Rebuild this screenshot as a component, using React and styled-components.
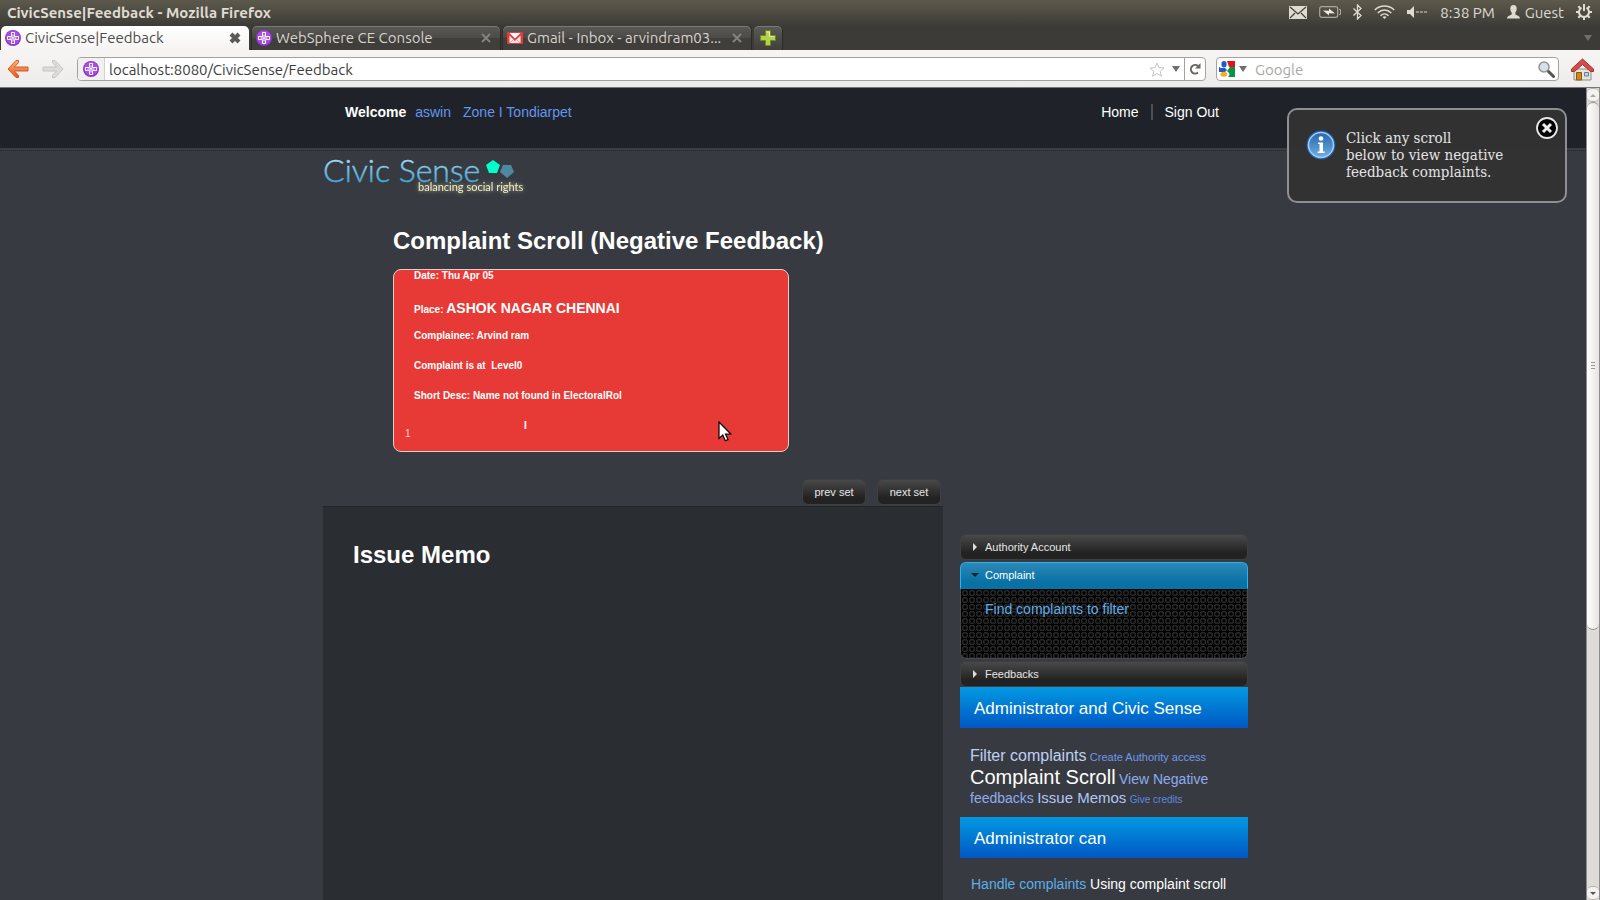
import React from "react";
import styled, { createGlobalStyle } from "styled-components";

const GlobalStyle = createGlobalStyle`
  * { box-sizing: border-box; }
  body { margin: 0; background: #373b41; }
  h1, h2, p { margin: 0; }
  button, input { font: inherit; color: inherit; border: 0; padding: 0; margin: 0; background: none; }
  a { text-decoration: none; color: inherit; }
  svg { display: block; flex: none; }
`;

const sans = `"Liberation Sans", Arial, sans-serif`;
const system = `Ubuntu, "Open Sans", "Noto Sans", sans-serif`;

const Window = styled.div`
  display: flex;
  flex-direction: column;
  height: 100vh;
  overflow: hidden;
  font-family: ${system};
  font-size: 15px;
`;

/* ---------- desktop panel and browser chrome ---------- */

const Chrome = styled.header`
  flex: none;
  background: linear-gradient(#5d5a4c, #3c3b37 26px);
  color: #dfdbd2;
`;

const TitleBar = styled.div`
  display: flex;
  align-items: center;
  justify-content: space-between;
  height: 26px;
  padding: 0 8px 2px 7px;
`;

const WindowTitle = styled.div`
  font-weight: 700;
`;

const Indicators = styled.div`
  display: flex;
  align-items: center;
  gap: 12px;
`;

const User = styled.button`
  display: flex;
  align-items: center;
  gap: 5px;
`;

const TabStrip = styled.nav`
  display: flex;
  align-items: flex-end;
  gap: 3px;
  height: 24px;
  padding: 0 8px 0 1px;
`;

const Tab = styled.div`
  display: flex;
  align-items: center;
  gap: 4px;
  width: 248px;
  height: 24px;
  padding: 0 8px 0 4px;
  border-radius: 5px 5px 0 0;
  color: ${(p) => (p.$active ? "#4c4c4c" : "#d8d4cb")};
  background: ${(p) => (p.$active ? "linear-gradient(#ffffff, #f5f4f2)" : "linear-gradient(#5a5955, #4b4a46 50%, #403f3b 52%, #3f3e3a)")};
  box-shadow: ${(p) => (p.$active ? "none" : "inset 0 1px #7b7a75, 1px 0 #2b2a27, -1px 0 #2b2a27")};
`;

const TabLabel = styled.button`
  flex: 1;
  text-align: left;
  white-space: nowrap;
  line-height: 20px;
`;

const NewTab = styled.button`
  display: flex;
  align-items: center;
  justify-content: center;
  width: 28px;
  height: 24px;
  border-radius: 5px 5px 0 0;
  background: linear-gradient(#5a5955, #403f3b);
  box-shadow: inset 0 1px #7b7a75, 1px 0 #2b2a27;
`;

const AllTabs = styled.button`
  margin-left: auto;
  align-self: center;
`;

const Toolbar = styled.div`
  display: flex;
  align-items: center;
  height: 38px;
  padding: 1px 6px 0 7px;
  background: linear-gradient(#f6f5f3, #edecea);
  border-bottom: 1px solid #77767a;
  color: #3c3c3c;
`;

const NavButton = styled.button`
  margin-right: 13px;
`;

const Field = styled.div`
  display: flex;
  align-items: center;
  height: 24px;
  background: #fff;
  border: 1px solid #a5a29e;
  border-radius: 4px;
  overflow: hidden;
`;

const Address = styled(Field)`
  flex: 1;
  margin-right: 10px;
`;

const Search = styled(Field)`
  width: 343px;
  gap: 4px;
  padding: 0 3px 0 2px;
  margin-right: 12px;
`;

const SiteIdentity = styled.button`
  display: flex;
  align-items: center;
  justify-content: center;
  width: 27px;
  height: 22px;
  background: #f1f0ee;
  border-right: 1px solid #d5d3d0;
`;

const TextInput = styled.input`
  flex: 1;
  min-width: 0;
  height: 22px;
  padding-left: 4px;
  outline: 0;
  &::placeholder { color: #a9a8a6; opacity: 1; }
`;

const FieldActions = styled.div`
  display: flex;
  align-items: center;
  gap: 7px;
  padding-right: 4px;
`;

const Reload = styled.button`
  display: flex;
  align-items: center;
  justify-content: center;
  width: 21px;
  height: 22px;
  border-left: 1px solid #a5a29e;
`;

/* ---------- page ---------- */

const Viewport = styled.div`
  display: flex;
  flex: 1;
  min-height: 0;
`;

const Page = styled.div`
  position: relative;
  flex: 1;
  min-width: 0;
  overflow: hidden;
  background: #373b41;
  color: #fff;
  font-family: ${sans};
  font-size: 14px;
  line-height: 16px;
`;

const Container = styled.div`
  width: 100%;
  max-width: 940px;
  margin: 0 auto;
`;

const TopBar = styled.div`
  height: 62px;
  padding-top: 16px;
  background: #1f2329;
  border-bottom: 2px solid #3a3d42;
`;

const TopBarInner = styled(Container)`
  display: flex;
  justify-content: space-between;
  padding: 0 44px 0 22px;
`;

const Welcome = styled.div`
  display: flex;
  gap: 9px;
`;

const ZoneLink = styled.a`
  color: #6495ed;
  margin-left: ${(p) => (p.$spaced ? "3px" : "0")};
`;

const Menu = styled.nav`
  display: flex;
  gap: 12px;
`;

const MenuDivider = styled.span`
  width: 2px;
  background: #4d5056;
`;

const Content = styled.div`
  border-top: 1px dotted #23262b;
  padding-top: 4px;
`;

const Scroll = styled.section`
  padding: 30px 0 27px 70px;
`;

const Title = styled.h1`
  font-size: 24px;
  line-height: 28px;
  font-weight: 700;
`;

const Card = styled.article`
  width: 396px;
  height: 183px;
  margin-top: 14px;
  border: 1px solid #dcd0ce;
  border-radius: 8px;
  background: #e73a36;
  font-size: 10px;
  line-height: 12px;
  font-weight: 700;
`;

const CardLine = styled.p`
  padding-left: 20px;
  margin-bottom: 18px;
  white-space: pre;
`;

const PlaceLine = styled(CardLine)`
  line-height: 16px;
  margin-bottom: 12px;
`;

const Place = styled.span`
  font-size: 14px;
`;

const CardFoot = styled.div`
  display: flex;
  height: 20px;
  padding-left: 11px;
`;

const CardIndex = styled.span`
  align-self: flex-end;
  width: 119px;
  font-weight: 400;
  color: #f8cfce;
`;

const Columns = styled.div`
  display: flex;
  align-items: flex-start;
  gap: 17px;
`;

const MainColumn = styled.main`
  width: 620px;
`;

const Pager = styled.div`
  display: flex;
  justify-content: flex-end;
  gap: 11px;
  padding: 0 2px 1px 0;
`;

const DarkButton = styled.button`
  width: 64px;
  height: 26px;
  border: 1px solid #3f3f3f;
  border-radius: 6px;
  background: linear-gradient(#494949, #222 75%);
  color: #e6e6e6;
  font-size: 11px;
`;

const Memo = styled.section`
  min-height: 560px;
  padding: 34px 30px;
  background: #2a2d31;
  border-top: 1px solid #222529;
`;

const Sidebar = styled.aside`
  width: 288px;
  padding-top: 55px;
`;

const Accordion = styled.div`
  display: flex;
  flex-direction: column;
  gap: 2px;
  font-size: 11px;
`;

const AccordionHead = styled.button`
  display: flex;
  align-items: center;
  gap: 6px;
  height: ${(p) => (p.$open ? "27px" : "26px")};
  padding: 0 0 1px 10px;
  border: 1px solid ${(p) => (p.$open ? "#26b3f7" : "#3f3f3f")};
  border-bottom-color: ${(p) => (p.$open ? "#0972a5" : "#3f3f3f")};
  border-radius: ${(p) => (p.$open ? "6px 6px 0 0" : "6px")};
  background: ${(p) => (p.$open ? "linear-gradient(#2c88b6, #0972a5 75%)" : "linear-gradient(#494949, #222 75%)")};
  color: ${(p) => (p.$open ? "#fff" : "#e6e6e6")};
  text-align: left;
`;

const AccordionBody = styled.div`
  height: 70px;
  margin-top: -2px;
  padding: 12px 24px;
  border: 1px solid #4a4a4a;
  border-top: 0;
  border-radius: 0 0 6px 6px;
  background-color: #000;
  background-image:
    radial-gradient(circle at 4px 4px, #000 1px, #242424 2px, #242424 3px, transparent 3px),
    linear-gradient(45deg, #181818 1px, transparent 1px);
  background-size: 7px 7px;
  font-size: 14px;
`;

const BlueLink = styled.a`
  color: #5eaeea;
`;

const Banner = styled.h2`
  height: 41px;
  padding: 3px 14px 0;
  background: linear-gradient(#0299e1, #0058c4);
  font-size: 17px;
  line-height: 38px;
  font-weight: 400;
  margin-top: ${(p) => (p.$first ? "0" : "8px")};
`;

const TagCloud = styled.p`
  padding: 19px 10px 0;
  font-size: 12px;
  line-height: 18px;
`;

const Tag = styled.a`
  font-size: ${(p) => p.$size}px;
  line-height: ${(p) => (p.$size > 16 ? "22px" : "18px")};
  color: ${(p) => p.$color};
`;

const Note = styled.p`
  padding: 18px 11px;
`;

const Toast = styled.div`
  position: absolute;
  top: 20px;
  right: 19px;
  display: flex;
  gap: 10px;
  width: 280px;
  height: 95px;
  padding: 20px 0 0 17px;
  border: 2px solid #8d8f91;
  border-radius: 10px;
  background: rgba(50, 50, 50, 0.96);
  color: #e4e4e4;
  font-family: "DejaVu Serif Condensed", "DejaVu Serif", serif;
  font-size: 15px;
  line-height: 17px;
`;

const ToastClose = styled.button`
  position: absolute;
  top: 7px;
  right: 7px;
`;

const ScrollTrack = styled.div`
  display: flex;
  flex-direction: column;
  width: 14px;
  border: 1px solid #8f8d8a;
  border-width: 0 1px;
  background: #dedcd9;
`;

const ScrollArrow = styled.button`
  display: flex;
  align-items: center;
  justify-content: center;
  height: 14px;
  background: #f3f2f1;
  border: 1px solid #b5b2ae;
  border-width: 1px 0;
  border-radius: 5px;
`;

const ScrollThumb = styled.div`
  display: flex;
  align-items: center;
  justify-content: center;
  height: 65%;
  margin-bottom: auto;
  border: 1px solid #918f8c;
  border-width: 1px 0;
  border-radius: 6px;
  background: linear-gradient(90deg, #fff, #e6e4e2);
`;

const Pointer = styled.div`
  position: absolute;
  left: 45.3%;
  top: 333px;
`;

const LogoTagline = styled.text`
  font-family: Lato, sans-serif;
  font-size: 11px;
  fill: #f0edc8;
  filter: drop-shadow(0 0 2px #b5b28a);
`;

/* ---------- drawings ---------- */

const Globe = () => (
  <svg width="16" height="16" viewBox="0 0 16 16">
    <circle cx="8" cy="8" r="8" fill="#8a35c9" />
    <circle cx="8" cy="7.500" r="7" fill="#aa4be6" />
    <path d="M6.500 2.500h3v4h4v3h-4v4h-3v-4h-4v-3h4zM8 4.500v7M4.500 8h7" fill="none" stroke="#fff" strokeWidth="1" strokeLinejoin="round" />
  </svg>
);

const GmailIcon = () => (
  <svg width="16" height="12" viewBox="0 0 16 12">
    <rect width="16" height="12" rx="1" fill="#e03c3c" />
    <path d="M2.500 1h11L8 6.500z" fill="#fff" />
    <path d="M2.500 3.500V11h11V3.500L8 9z" fill="#fbeaea" />
    <path d="M3 11l3.500-3.500M13 11L9.500 7.500" stroke="#efa3a3" />
  </svg>
);

const Cross = ({ color, width = 2 }) => (
  <svg width="12" height="12" viewBox="0 0 12 12">
    <path d="M2 2l8 8M10 2l-8 8" stroke={color} strokeWidth={width} />
  </svg>
);

const Triangle = ({ color = "#6f6e6a", width = 8 }) => (
  <svg width={width} height="6" viewBox="0 0 8 6"><path d="M0 0h8L4 6z" fill={color} /></svg>
);

const ArrowIcon = ({ forward }) => (
  <svg width="22" height="20" viewBox="0 0 22 20">
    <defs>
      <linearGradient id="back" x2="0" y2="1"><stop stopColor="#f8b876" /><stop offset="1" stopColor="#e2561f" /></linearGradient>
    </defs>
    <path
      d={forward ? "M21 10l-8 8.500h-2.500v-2L14.500 12H1V8h13.500l-4-4.500v-2H13z" : "M1 10l8-8.500h2.500v2L7.500 8H21v4H7.500l4 4.500v2H9z"}
      fill={forward ? "#dddbd8" : "url(#back)"}
      stroke={forward ? "#c6c4c1" : "#d9572a"}
      strokeLinejoin="round"
    />
  </svg>
);

const PlusIcon = () => (
  <svg width="16" height="16" viewBox="0 0 16 16">
    <path d="M5.500.5h5v5h5v5h-5v5h-5v-5h-5v-5h5z" fill="#b4d14a" stroke="#6a8c27" />
    <path d="M6.500 2h3v4.500H14" fill="none" stroke="#e4f0a0" />
  </svg>
);

const MailIcon = () => (
  <svg width="18" height="13" viewBox="0 0 18 13">
    <rect width="18" height="13" fill="#dfdbd2" />
    <path d="M1 1l8 7 8-7M1 12l5-5M17 12l-5-5" fill="none" stroke="#45443f" strokeWidth="1.300" />
  </svg>
);

const BatteryIcon = () => (
  <svg width="22" height="12" viewBox="0 0 22 12">
    <rect x=".7" y=".7" width="18" height="10.600" rx="2" fill="none" stroke="#aaa79e" strokeWidth="1.200" />
    <path d="M20 3.500h1.500v5H20" fill="none" stroke="#aaa79e" />
    <path d="M4 4.500l6 .2V2.500l6 5-6-.3v2.300z" fill="#eeeae2" />
  </svg>
);

const BluetoothIcon = () => (
  <svg width="9" height="16" viewBox="0 0 9 16">
    <path d="M.5 4.500l7.500 7-3.500 3.500V1L8 4.500l-7.500 7" fill="none" stroke="#dfdbd2" strokeWidth="1.300" />
  </svg>
);

const WifiIcon = () => (
  <svg width="21" height="14" viewBox="0 0 21 14">
    <g fill="none" stroke="#dfdbd2" strokeWidth="1.500">
      <path d="M.8 5c5.500-5.300 13.900-5.300 19.400 0" />
      <path d="M3.700 8c4-3.900 9.600-3.900 13.600 0" />
      <path d="M6.500 10.700c2.300-2.200 5.700-2.200 8 0" />
    </g>
    <path d="M8.500 12c1.200-1 2.800-1 4 0l-2 2z" fill="#dfdbd2" />
  </svg>
);

const SpeakerIcon = () => (
  <svg width="21" height="12" viewBox="0 0 21 12">
    <path d="M0 4h3l4-4v12L3 8H0z" fill="#dfdbd2" />
    <path d="M9 6h12" stroke="#a9a69e" strokeWidth="1.500" strokeDasharray="3 1" />
  </svg>
);

const PersonIcon = () => (
  <svg width="13" height="14" viewBox="0 0 13 14">
    <path d="M6.500 0c2.200 0 3.300 1.600 3.200 3.800C9.600 6 8.800 7 8.300 7.800v1.400c1.200 1.300 4.400 1.300 4.700 4.300H0c.3-3 3.500-3 4.700-4.300V7.800C4.200 7 3.400 6 3.300 3.800 3.200 1.600 4.300 0 6.500 0z" fill="#dfdbd2" />
  </svg>
);

const PowerGear = () => (
  <svg width="16" height="16" viewBox="0 0 16 16" stroke="#dfdbd2" fill="none">
    <path d="M5.500 3.700a5 5 0 1 0 5 0" strokeWidth="2" />
    <path d="M8 0v7" strokeWidth="2" />
    <path d="M8 13v3M0 8h3M13 8h3M2.300 2.300l2 2M13.700 2.300l-2 2M2.300 13.700l2-2M13.700 13.700l-2-2" strokeWidth="2" />
  </svg>
);

const StarIcon = () => (
  <svg width="16" height="15" viewBox="0 0 16 15">
    <path d="M8 1l2 4.600 5 .4-3.800 3.300 1.200 4.900L8 11.600l-4.400 2.600 1.200-4.900L1 6l5-.4z" fill="#fff" stroke="#c5c3c0" />
  </svg>
);

const ReloadIcon = () => (
  <svg width="12" height="12" viewBox="0 0 12 12">
    <path d="M9 9.500A4.300 4.300 0 1 1 9 3" fill="none" stroke="#666561" strokeWidth="2" />
    <path d="M11.500 0v5.500H6z" fill="#666561" />
  </svg>
);

const GoogleIcon = () => (
  <svg width="16" height="16" viewBox="0 0 16 16">
    <rect width="16" height="16" fill="#fff" />
    <path d="M8 0h8v6H10z" fill="#e2141b" />
    <path d="M11 6h5v10H9c3-3 1-4-1-6z" fill="#0a9244" />
    <path d="M0 6l2 1h4l2 2-2 2H0z" fill="#1f5bc8" />
    <ellipse cx="5" cy="3.300" rx="2.600" ry="3.300" fill="#1f5bc8" />
    <ellipse cx="4.800" cy="13.300" rx="3.400" ry="2.500" fill="#f3ae1b" />
  </svg>
);

const Magnifier = () => (
  <svg width="17" height="17" viewBox="0 0 17 17">
    <path d="M10 10l5.500 5.500" stroke="#55534f" strokeWidth="3" strokeLinecap="round" />
    <circle cx="6" cy="6" r="5" fill="#d5e2ea" stroke="#96948f" strokeWidth="1.500" />
  </svg>
);

const HomeIcon = () => (
  <svg width="23" height="23" viewBox="0 0 23 23">
    <path d="M3 11h17v11H3z" fill="#e6e3df" stroke="#8f8c88" />
    <path d="M5.500 14.500h5V22h-5z" fill="#d0851a" stroke="#8d5a10" />
    <path d="M13.500 14.500h4v3.500h-4z" fill="#bcd3ea" stroke="#6d7d91" />
    <path d="M11.500 1L22.500 11v2.500h-3l-8-7-8 7h-3V11z" fill="#d64a4a" stroke="#a92f2f" strokeLinejoin="round" />
  </svg>
);

const Logo = () => (
  <svg width="210" height="42" viewBox="0 0 210 42" role="img" aria-label="Civic Sense">
    <defs>
      <linearGradient id="logo" x2="0" y2="1">
        <stop offset=".2" stopColor="#a5e0f8" />
        <stop offset=".8" stopColor="#4aa5cf" />
      </linearGradient>
    </defs>
    <text x="0" y="27" fontFamily="Lato, sans-serif" fontWeight="300" fontSize="32" fill="url(#logo)" stroke="url(#logo)" strokeWidth=".4">Civic Sense</text>
    <path d="M170 5l7 5-3 8h-8l-3-8z" fill="#0fc" />
    <path d="M180 10h8l3 7-7 6-7-6z" fill="#5088a0" />
    <LogoTagline x="95" y="36">balancing social rights</LogoTagline>
  </svg>
);

const InfoIcon = () => (
  <svg width="30" height="30" viewBox="0 0 30 30">
    <defs>
      <linearGradient id="info" x2="0" y2="1"><stop stopColor="#2566ad" /><stop offset="1" stopColor="#72aee0" /></linearGradient>
    </defs>
    <circle cx="15" cy="15" r="14.500" fill="#1c5fae" />
    <circle cx="15" cy="15" r="12.500" fill="url(#info)" stroke="#a7cdf0" strokeWidth="1.500" />
    <circle cx="15" cy="8.500" r="2.300" fill="#fff" />
    <path d="M12 12.500h5v9h1.700V23h-7v-1.500h1.800V14H12z" fill="#fff" />
  </svg>
);

const CloseIcon = () => (
  <svg width="22" height="22" viewBox="0 0 22 22">
    <circle cx="11" cy="11" r="10" fill="#000" stroke="#e8e8e8" strokeWidth="1.800" />
    <path d="M7 7l8 8M15 7l-8 8" stroke="#eee" strokeWidth="3" />
  </svg>
);

const Caret = ({ open }) => (
  <svg width="8" height="8" viewBox="0 0 8 8">
    <path d={open ? "M0 2h8L4 6z" : "M2 0v8l4-4z"} fill={open ? "#222" : "#ddd"} />
  </svg>
);

const CursorIcon = () => (
  <svg width="14" height="21" viewBox="0 0 14 21">
    <path d="M1 1v16.500l3.800-3.500 2.500 5.800 2.700-1.200-2.500-5.600h5.300z" fill="#fff" stroke="#000" strokeWidth="1.200" />
  </svg>
);

const tags = [
  ["Filter complaints", 16, "#bfd0f5"],
  ["Create Authority access", 11, "#6f97ee"],
  ["Complaint Scroll", 20, "#ffffff"],
  ["View Negative feedbacks", 14, "#8fabf0"],
  ["Issue Memos", 15, "#b3c6f5"],
  ["Give credits", 10, "#5f86e0"],
];

const cardRows = ["Complainee: Arvind ram", "Complaint is at  Level0", "Short Desc: Name not found in ElectoralRol"];

export default function App() {
  return (
    <Window>
      <GlobalStyle />
      <Chrome>
        <TitleBar>
          <WindowTitle>CivicSense|Feedback - Mozilla Firefox</WindowTitle>
          <Indicators>
            <MailIcon />
            <BatteryIcon />
            <BluetoothIcon />
            <WifiIcon />
            <SpeakerIcon />
            <span>8:38 PM</span>
            <User><PersonIcon />Guest</User>
            <PowerGear />
          </Indicators>
        </TitleBar>
        <TabStrip>
          <Tab $active>
            <Globe />
            <TabLabel>CivicSense|Feedback</TabLabel>
            <button aria-label="Close tab"><Cross color="#5b5a57" width={4} /></button>
          </Tab>
          <Tab>
            <Globe />
            <TabLabel>WebSphere CE Console</TabLabel>
            <button aria-label="Close tab"><Cross color="#83827d" /></button>
          </Tab>
          <Tab>
            <GmailIcon />
            <TabLabel>Gmail - Inbox - arvindram03...</TabLabel>
            <button aria-label="Close tab"><Cross color="#83827d" /></button>
          </Tab>
          <NewTab aria-label="New tab"><PlusIcon /></NewTab>
          <AllTabs aria-label="List all tabs"><Triangle /></AllTabs>
        </TabStrip>
        <Toolbar>
          <NavButton aria-label="Back"><ArrowIcon /></NavButton>
          <NavButton aria-label="Forward"><ArrowIcon forward /></NavButton>
          <Address>
            <SiteIdentity aria-label="Site identity"><Globe /></SiteIdentity>
            <TextInput aria-label="Address" defaultValue="localhost:8080/CivicSense/Feedback" />
            <FieldActions>
              <StarIcon />
              <Triangle />
            </FieldActions>
            <Reload aria-label="Reload"><ReloadIcon /></Reload>
          </Address>
          <Search>
            <GoogleIcon />
            <Triangle />
            <TextInput aria-label="Search" placeholder="Google" />
            <Magnifier />
          </Search>
          <button aria-label="Home page"><HomeIcon /></button>
        </Toolbar>
      </Chrome>

      <Viewport>
        <Page>
          <TopBar>
            <TopBarInner>
              <Welcome>
                <strong>Welcome</strong>
                <ZoneLink href="#user">aswin</ZoneLink>
                <ZoneLink href="#zone" $spaced>Zone I Tondiarpet</ZoneLink>
              </Welcome>
              <Menu>
                <a href="#home">Home</a>
                <MenuDivider />
                <a href="#signout">Sign Out</a>
              </Menu>
            </TopBarInner>
          </TopBar>

          <Content>
            <Container>
              <Logo />
              <Scroll>
                <Title>Complaint Scroll (Negative Feedback)</Title>
                <Card>
                  <CardLine>Date: Thu Apr 05</CardLine>
                  <PlaceLine>Place: <Place>ASHOK NAGAR CHENNAI</Place></PlaceLine>
                  {cardRows.map((row) => <CardLine key={row}>{row}</CardLine>)}
                  <CardFoot>
                    <CardIndex>1</CardIndex>
                    <span>I</span>
                  </CardFoot>
                </Card>
              </Scroll>
              <Columns>
                <MainColumn>
                  <Pager>
                    <DarkButton>prev set</DarkButton>
                    <DarkButton>next set</DarkButton>
                  </Pager>
                  <Memo>
                    <Title as="h2">Issue Memo</Title>
                  </Memo>
                </MainColumn>
                <Sidebar>
                  <Accordion>
                    <AccordionHead><Caret />Authority Account</AccordionHead>
                    <AccordionHead $open><Caret open />Complaint</AccordionHead>
                    <AccordionBody>
                      <BlueLink href="#find">Find complaints to filter</BlueLink>
                    </AccordionBody>
                    <AccordionHead><Caret />Feedbacks</AccordionHead>
                  </Accordion>
                  <Banner $first>Administrator and Civic Sense</Banner>
                  <TagCloud>
                    {tags.map(([label, size, color]) => (
                      <React.Fragment key={label}>
                        <Tag href="#tag" $size={size} $color={color}>{label}</Tag>{" "}
                      </React.Fragment>
                    ))}
                  </TagCloud>
                  <Banner>Administrator can</Banner>
                  <Note><BlueLink href="#handle">Handle complaints</BlueLink> Using complaint scroll</Note>
                </Sidebar>
              </Columns>
            </Container>
          </Content>

          <Toast role="status">
            <InfoIcon />
            <p>Click any scroll<br />below to view negative<br />feedback complaints.</p>
            <ToastClose aria-label="Dismiss"><CloseIcon /></ToastClose>
          </Toast>
          <Pointer><CursorIcon /></Pointer>
        </Page>
        <ScrollTrack>
          <ScrollArrow aria-label="Scroll up"><svg width="6" height="3"><path d="M0 3h6L3 0z" fill="#aaa" /></svg></ScrollArrow>
          <ScrollThumb>
            <svg width="4" height="7"><path d="M0 .5h4M0 3.500h4M0 6.500h4" stroke="#999" /></svg>
          </ScrollThumb>
          <ScrollArrow aria-label="Scroll down"><svg width="6" height="3"><path d="M0 0h6L3 3z" fill="#555" /></svg></ScrollArrow>
        </ScrollTrack>
      </Viewport>
    </Window>
  );
}
